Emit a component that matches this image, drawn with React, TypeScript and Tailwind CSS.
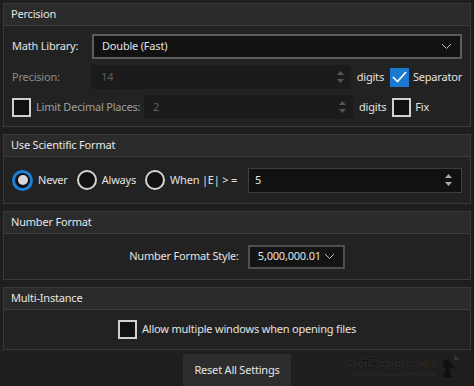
import React from "react";

const font = { fontFamily: '"Noto Sans", "Open Sans", Arial, sans-serif', letterSpacing: "-0.2px" };

function Section({ title, children, bodyClass }: { title: string; children: React.ReactNode; bodyClass: string }) {
    return (
        <div className="border border-[#3a3a3a] bg-[#222222]">
            <div className="h-[22px] flex items-center px-[7px] bg-[#2b2b2b] border-b border-[#3c3c3c] text-[#e6e6e6]">{title}</div>
            <div className={bodyClass}>{children}</div>
        </div>
    );
}

function Spin({ dim }: { dim?: boolean }) {
    const c = dim ? "#555" : "#aaa";
    return (
        <svg width="9" height="16" viewBox="0 0 9 16" className="shrink-0">
            <path d="M4.5 2 L8 6 L1 6 Z" fill={c} />
            <path d="M4.5 14 L8 10 L1 10 Z" fill={c} />
        </svg>
    );
}

function Chevron() {
    return (
        <svg width="11" height="7" viewBox="0 0 11 7" className="shrink-0">
            <path d="M1 1 L5.5 5.5 L10 1" stroke="#bdbdbd" strokeWidth="1" fill="none" />
        </svg>
    );
}

function Box({ checked }: { checked?: boolean }) {
    if (checked) {
        return (
            <div className="w-[19px] h-[19px] bg-[#1b79d3] flex items-center justify-center shrink-0">
                <svg width="15" height="12" viewBox="0 0 15 12">
                    <path d="M1 6 L5.5 10.5 L14 1" stroke="#fff" strokeWidth="1.6" fill="none" />
                </svg>
            </div>
        );
    }
    return <div className="w-[19px] h-[19px] border-2 border-[#d0d0d0] bg-[#111] shrink-0" />;
}

function Radio({ on, label }: { on?: boolean; label: string }) {
    return (
        <div className="flex items-center gap-[5px]">
            {on ? (
                <div className="w-[21px] h-[21px] rounded-full bg-[#1d7ed6] flex items-center justify-center">
                    <div className="w-[15px] h-[15px] rounded-full bg-[#111] flex items-center justify-center">
                        <div className="w-[10px] h-[10px] rounded-full bg-[#d8d8d8]" />
                    </div>
                </div>
            ) : (
                <div className="w-[20px] h-[20px] rounded-full border-2 border-[#d4d4d4] bg-[#111]" />
            )}
            <span className="whitespace-nowrap">{label}</span>
        </div>
    );
}

export default function App() {
    return (
        <div style={font} className="w-[474px] h-[386px] bg-[#1e1e1e] text-[11px] text-[#e2e2e2] pt-[3px] pl-[3px] pr-[3px] flex flex-col gap-[7px] overflow-hidden">
            <Section title="Percision" bodyClass="pt-[8px] pb-[7px] pl-[8px] pr-[8px] flex flex-col gap-[6px]">
                <div className="flex items-center h-[25px]">
                    <span className="w-[80px]">Math Library:</span>
                    <div className="flex-1 h-[25px] bg-[#111] border-2 border-[#5c5c5c] flex items-center justify-between px-[8px]">
                        <span>Double (Fast)</span>
                        <Chevron />
                    </div>
                </div>
                <div className="flex items-center h-[24px] text-[#8e8e8e]">
                    <span className="w-[80px]">Precision:</span>
                    <div className="w-[262px] h-[24px] bg-[#1b1b1b] flex items-center justify-between pl-[10px] pr-[6px] text-[#5e5e5e]">
                        <span>14</span>
                        <Spin dim />
                    </div>
                    <span className="ml-[6px] text-[#e2e2e2]">digits</span>
                    <div className="ml-[6px]"><Box checked /></div>
                    <span className="ml-[4px] text-[#e2e2e2]">Separator</span>
                </div>
                <div className="flex items-center h-[24px]">
                    <Box />
                    <span className="ml-[5px] w-[108px] whitespace-nowrap text-[#a0a0a0]">Limit Decimal Places:</span>
                    <div className="w-[209px] h-[24px] bg-[#1b1b1b] flex items-center justify-between pl-[9px] pr-[6px] text-[#5e5e5e]">
                        <span>2</span>
                        <Spin dim />
                    </div>
                    <span className="ml-[6px]">digits</span>
                    <div className="ml-[6px]"><Box /></div>
                    <span className="ml-[4px]">Fix</span>
                </div>
            </Section>

            <Section title="Use Scientific Format" bodyClass="h-[46px] pl-[8px] pr-[8px] flex items-center">
                <div className="flex items-center gap-[9px]">
                    <Radio on label="Never" />
                    <Radio label="Always" />
                    <Radio label="When |E| > =" />
                </div>
                <div className="ml-[11px] flex-1 h-[25px] bg-[#111] border border-[#3e3e3e] flex items-center justify-between pl-[6px] pr-[8px]">
                    <span>5</span>
                    <Spin />
                </div>
            </Section>

            <Section title="Number Format" bodyClass="h-[45px] flex items-center justify-center">
                <div className="flex items-center gap-[9px]">
                    <span>Number Format Style:</span>
                    <div className="h-[24px] w-[97px] bg-[#141414] border-2 border-[#4f4f4f] flex items-center justify-between px-[8px]">
                        <span>5,000,000.01</span>
                        <Chevron />
                    </div>
                </div>
            </Section>

            <Section title="Multi-Instance" bodyClass="h-[39px] flex items-center justify-center">
                <div className="flex items-center gap-[5px]">
                    <Box />
                    <span>Allow multiple windows when opening files</span>
                </div>
            </Section>

            <div className="relative flex justify-center -mt-[3px]">
                <button className="h-[32px] px-[11px] bg-[#2d2d2d] text-[#e6e6e6]">Reset All Settings</button>
                <div className="absolute right-[11px] top-[0px] flex items-center gap-[3px]" style={{ letterSpacing: "0", color: "#101010", textShadow: "0 0 1px #555" }}>
                    <div className="flex flex-col items-end leading-none">
                        <span className="text-[14px]" style={{ fontFamily: '"Liberation Sans", Arial, sans-serif' }}>SoftRadar.com</span>
                        <span className="text-[6px] mt-[1px]">Software reviews &amp; downloads</span>
                    </div>
                    <svg width="20" height="24" viewBox="0 0 20 24">
                        <path d="M3 5 Q1 14 9 17 L12 10 Z" fill="#101010" />
                        <path d="M6 6 L14 14" stroke="#101010" strokeWidth="2" />
                        <path d="M14 2 A5 5 0 0 1 18 6 M14 4 A3 3 0 0 1 16 6" stroke="#505050" strokeWidth="1" fill="none" />
                        <path d="M6 16 L3 23 L12 23 L9 16 Z" fill="#101010" />
                    </svg>
                </div>
            </div>
        </div>
    );
}
